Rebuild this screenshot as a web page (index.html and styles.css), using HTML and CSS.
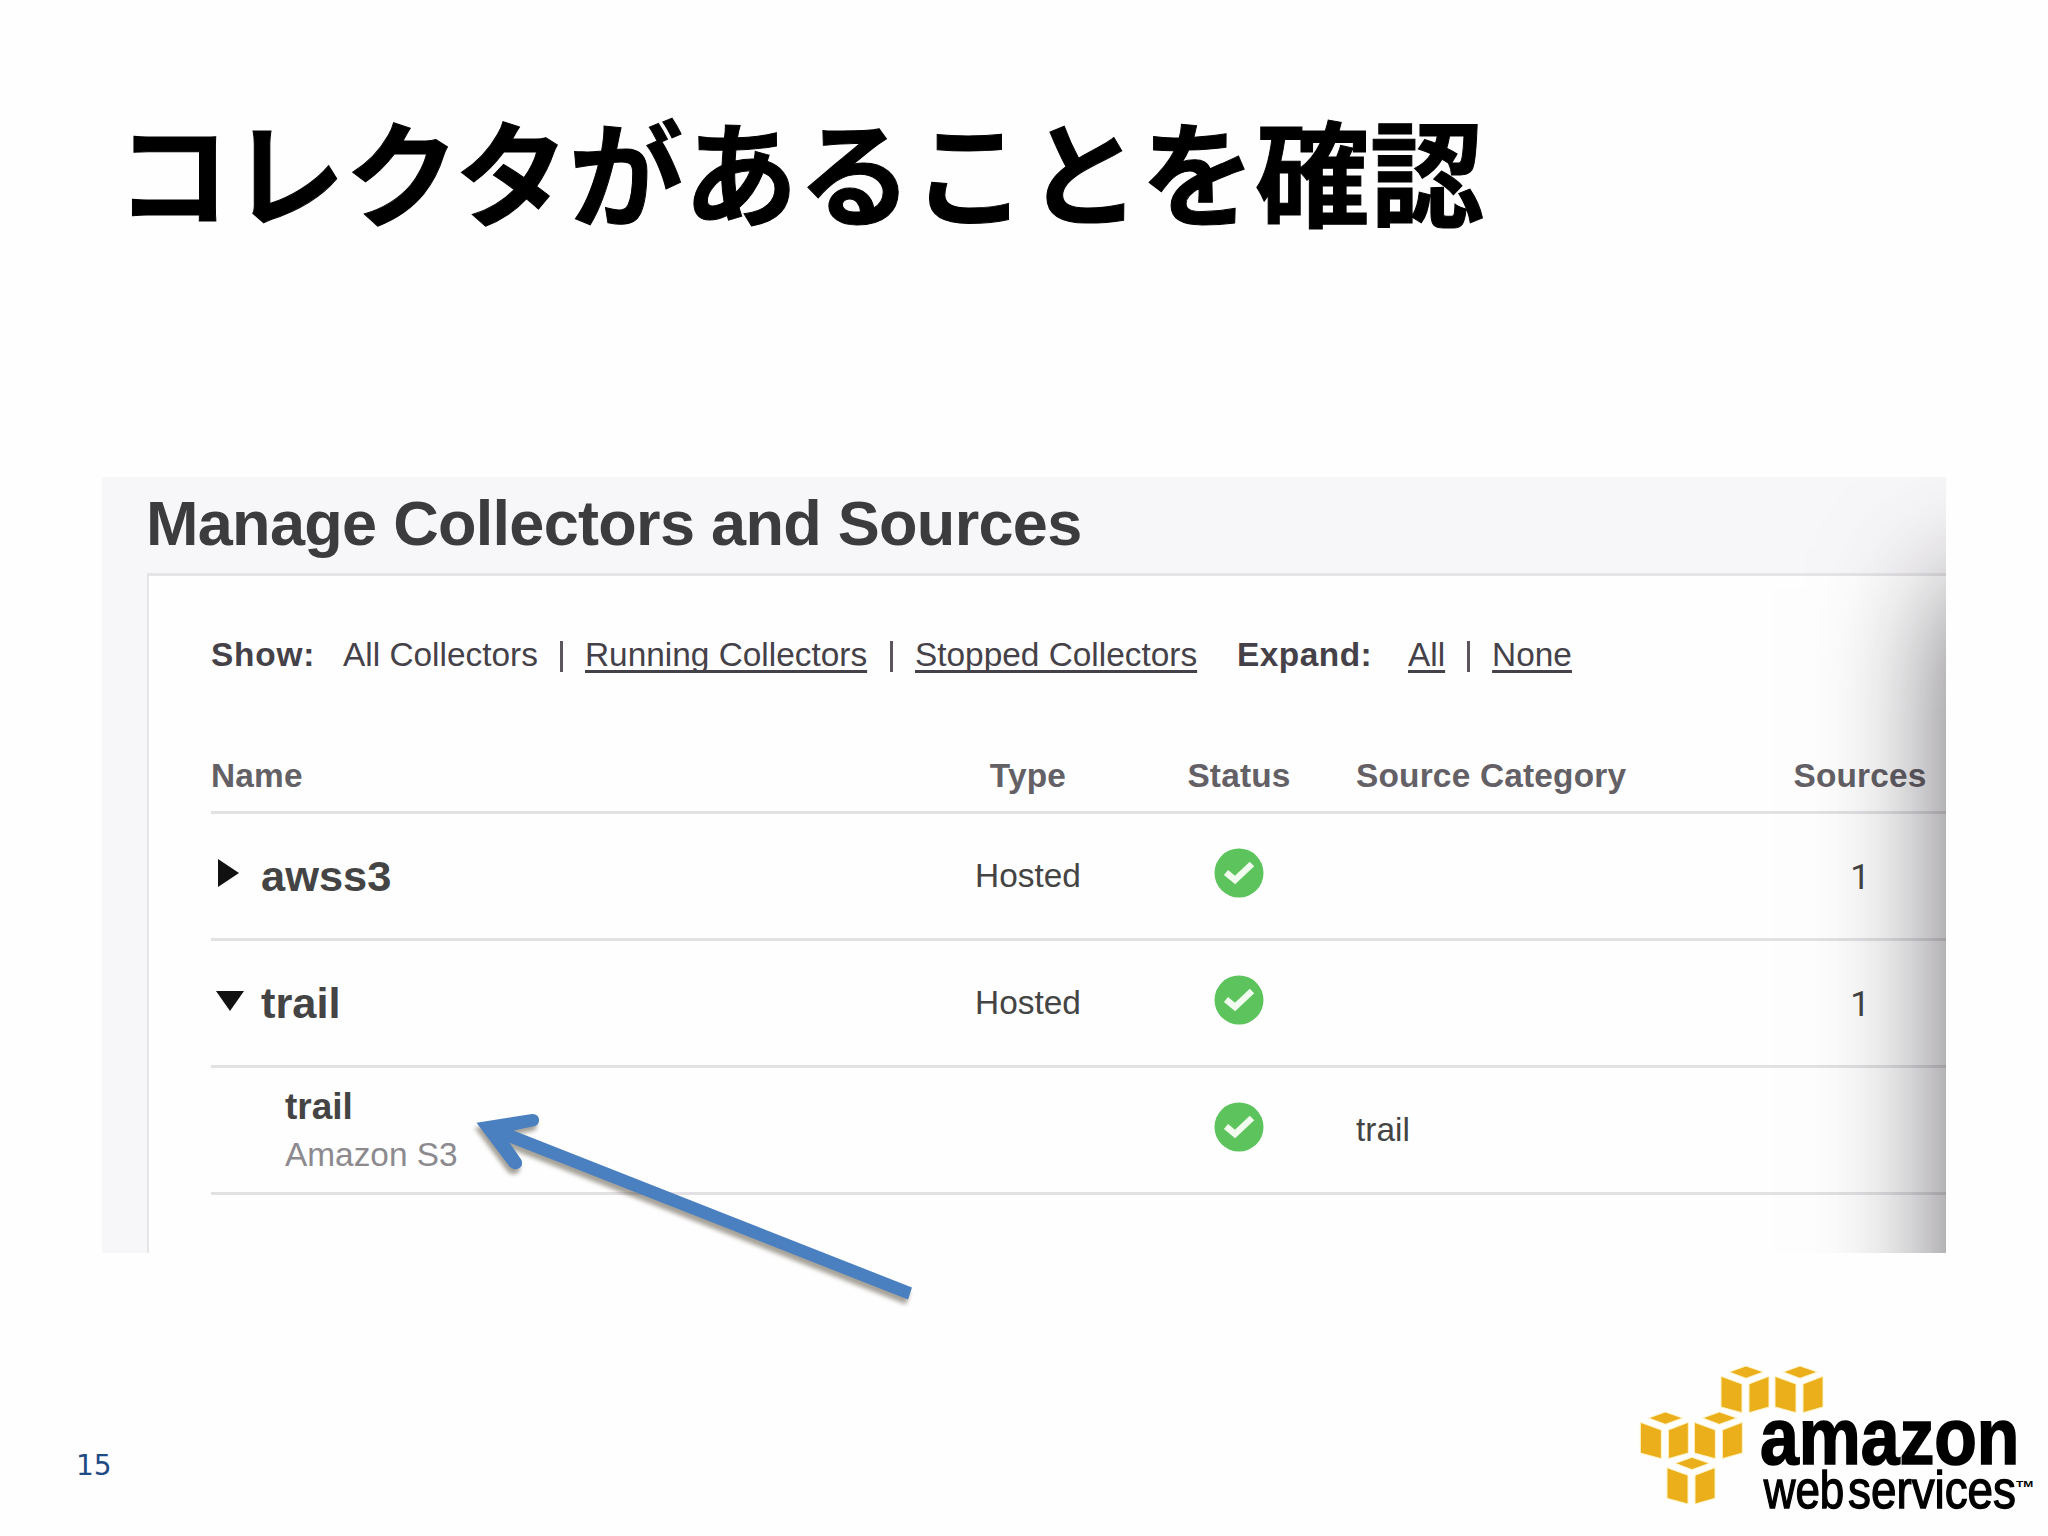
FILE: index.html
```
<!DOCTYPE html>
<html lang="ja">
<head>
    <meta charset="UTF-8">
    <meta name="viewport" content="width=device-width, initial-scale=1.0">
    <title>コレクタがあることを確認</title>
    <link rel="stylesheet" href="styles.css">
</head>
<body>

<div class="slide">
    <h1 class="slide-title">コレクタがあることを確認</h1>

    <div class="panel">
        <h2 class="panel-title">Manage Collectors and Sources</h2>

        <div class="sheet">
            <!-- Filters -->
            <div class="filters">
                <b class="show">Show:</b>
                <span class="current">All Collectors</span>
                <i class="sep"></i>
                <a class="link">Running Collectors</a>
                <i class="sep"></i>
                <a class="link">Stopped Collectors</a>
                <b class="expand">Expand:</b>
                <a>All</a>
                <i class="sep"></i>
                <a>None</a>
            </div>

            <!-- Collectors table -->
            <div class="row row-head">
                <div>Name</div>
                <div class="center">Type</div>
                <div class="center">Status</div>
                <div class="category">Source Category</div>
                <div class="center">Sources</div>
            </div>
            <div class="row">
                <div class="name">
                    <svg class="toggle" width="30" height="30" viewBox="0 0 30 30"><path d="M7 1L28 15L7 29Z"/></svg>
                    awss3
                </div>
                <div class="center">Hosted</div>
                <div class="center"><svg class="ok" width="50" height="50" viewBox="0 0 50 50"><circle cx="25" cy="25" r="24.5"/><path d="M12 24.5L21 32L38 16"/></svg></div>
                <div class="category"></div>
                <div class="center count">1</div>
            </div>
            <div class="row">
                <div class="name">
                    <svg class="toggle" width="30" height="30" viewBox="0 0 30 30"><path d="M5 6H33L19 26Z"/></svg>
                    trail
                </div>
                <div class="center">Hosted</div>
                <div class="center"><svg class="ok" width="50" height="50" viewBox="0 0 50 50"><circle cx="25" cy="25" r="24.5"/><path d="M12 24.5L21 32L38 16"/></svg></div>
                <div class="category"></div>
                <div class="center count">1</div>
            </div>
            <div class="row">
                <div class="source">
                    <div class="source-name">trail</div>
                    <div class="source-type">Amazon S3</div>
                </div>
                <div></div>
                <div class="center"><svg class="ok" width="50" height="50" viewBox="0 0 50 50"><circle cx="25" cy="25" r="24.5"/><path d="M12 24.5L21 32L38 16"/></svg></div>
                <div class="category">trail</div>
                <div></div>
            </div>
        </div>
        <div class="side-shadow"></div>
    </div>

    <!-- Arrow pointing at the source -->
    <svg class="arrow" width="460" height="210" viewBox="470 1105 460 210">
        <path d="M476.5 1122.7L532 1114Q538 1114 539 1119Q539.5 1124.5 535 1126L513.5 1130.5L912 1287.5L908 1299.5L509.6 1142.7L521.5 1160Q523.5 1166 518.5 1168.5Q513 1170.5 509.5 1166.5Z"/>
    </svg>

    <div class="footer">
        <span class="page-number">15</span>
        <svg class="logo" width="428" height="186" viewBox="0 0 1284 558">
            <defs>
                <g id="cube">
                    <path d="M328 66L378 48L430 66L378 85Z"/>
                    <path d="M303 79L366 102V188L303 171Z"/>
                    <path d="M387 102L447 79V171L387 188Z"/>
                </g>
            </defs>
            <g class="cubes">
                <use href="#cube"/>
                <use href="#cube" x="162"/>
                <use href="#cube" x="-242" y="138"/>
                <use href="#cube" x="-80" y="138"/>
                <use href="#cube" x="-162" y="274"/>
            </g>
            <text class="logo-top" x="420" y="343" textLength="778" lengthAdjust="spacingAndGlyphs">amazon</text>
            <text class="logo-bottom" x="431" y="475" textLength="242" lengthAdjust="spacingAndGlyphs">web</text>
            <text class="logo-bottom" x="684" y="475" textLength="504" lengthAdjust="spacingAndGlyphs">services</text>
            <text class="logo-tm" x="1188" y="412" textLength="52" lengthAdjust="spacingAndGlyphs">TM</text>
        </svg>
    </div>
</div>

</body>
</html>
```
FILE: styles.css
```
body {
    margin: 0;
    background-color: #fefefe;
    font-family: "Liberation Sans", Arial, sans-serif;
}
.slide {
    position: relative;
    width: 2048px;
    height: 1536px;
    overflow: hidden;
    display: flex;
    flex-direction: column;
}
.slide-title {
    flex: none;
    height: 477px;
    margin: 0;
    padding: 83px 0 0 116px;
    box-sizing: border-box;
    font-family: "Noto Sans CJK JP", sans-serif;
    font-size: 114.4px;
    font-weight: bold;
    line-height: 170px;
    color: #000;
    -webkit-text-stroke: 1px #000;
    white-space: nowrap;
}

/* Collectors screen */
.panel {
    position: relative;
    flex: none;
    width: 1844px;
    height: 776px;
    margin-left: 102px;
    overflow: hidden;
    background-color: #f7f6f8;
    font-size: 33.4px;
    color: #444;
}
.panel-title {
    margin: 0;
    padding-left: 44px;
    height: 96px;
    font-size: 63px;
    line-height: 92px;
    letter-spacing: -0.7px;
    color: #3c3c3e;
    white-space: nowrap;
}
.sheet {
    margin-left: 45px;
    padding: 58px 0 0 62px;
    height: 700px;
    border-top: 3px solid #e6e4e7;
    border-left: 2px solid #e6e4e7;
    background-color: #fefefe;
}
.filters {
    display: flex;
    height: 121px;
    line-height: 41px;
    color: #454148;
    white-space: nowrap;
}
.filters a {
    flex: none;
    text-decoration: underline;
    text-decoration-thickness: 3px;
    text-underline-offset: 4px;
    text-decoration-skip-ink: none;
}
.filters .link {
    width: 283px;
}
.sep {
    flex: none;
    width: 3px;
    height: 31px;
    margin: 7px 22px 0 22px;
    background-color: #5a565c;
}
.show {
    width: 132px;
    letter-spacing: 0.8px;
}
.current {
    width: 195px;
}
.expand {
    width: 171px;
    margin-left: 39px;
    letter-spacing: 0.5px;
}
.row {
    display: grid;
    grid-template-columns: 718px 198px 224px 422px 174px;
    align-items: center;
    height: 127px;
    box-sizing: border-box;
    border-bottom: 3px solid #e3e1e4;
}
.row-head {
    height: 59px;
    align-items: start;
    line-height: 41px;
    font-weight: bold;
    letter-spacing: 0.2px;
    color: #636066;
}
.center {
    text-align: center;
}
.category {
    padding-left: 5px;
}
.count {
    padding-top: 2px;
    font-family: Roboto, sans-serif;
    font-size: 35px;
}
.name {
    display: flex;
    align-items: center;
    font-size: 43.4px;
    font-weight: bold;
}
.toggle {
    margin: -7px 20px 0 0;
    overflow: visible;
    fill: #111;
}
.source {
    padding: 2px 0 0 74px;
    line-height: 48px;
}
.source-name {
    font-size: 37px;
    font-weight: bold;
}
.source-type {
    color: #8c8a8e;
}
.ok {
    display: block;
    margin: -7px auto 0;
    fill: #5cc35d;
}
.ok path {
    fill: none;
    stroke: #f2fdf0;
    stroke-width: 6.5;
}
.side-shadow {
    position: absolute;
    left: 1844px;
    top: 112px;
    width: 400px;
    height: 1200px;
    box-shadow: 0 0 115px rgba(20, 15, 25, 0.62);
}

.arrow {
    position: absolute;
    left: 470px;
    top: 1105px;
    fill: #4b80c0;
    filter: drop-shadow(-2px 5px 2px rgba(60, 50, 30, 0.45));
}

.footer {
    display: flex;
    justify-content: space-between;
    margin-top: 97px;
}
.page-number {
    margin: 96px 0 0 76px;
    font-family: "DejaVu Sans", sans-serif;
    font-size: 28px;
    line-height: 40px;
    color: #1f4b85;
}
.cubes {
    fill: #ecaf1c;
    stroke: #fff3c4;
    stroke-width: 3;
}
.logo-top {
    font-size: 240px;
    font-weight: bold;
    stroke: #000;
    stroke-width: 5;
}
.logo-bottom {
    font-size: 158px;
    stroke: #000;
    stroke-width: 4;
}
.logo-tm {
    font-size: 29px;
    font-weight: bold;
}
```
